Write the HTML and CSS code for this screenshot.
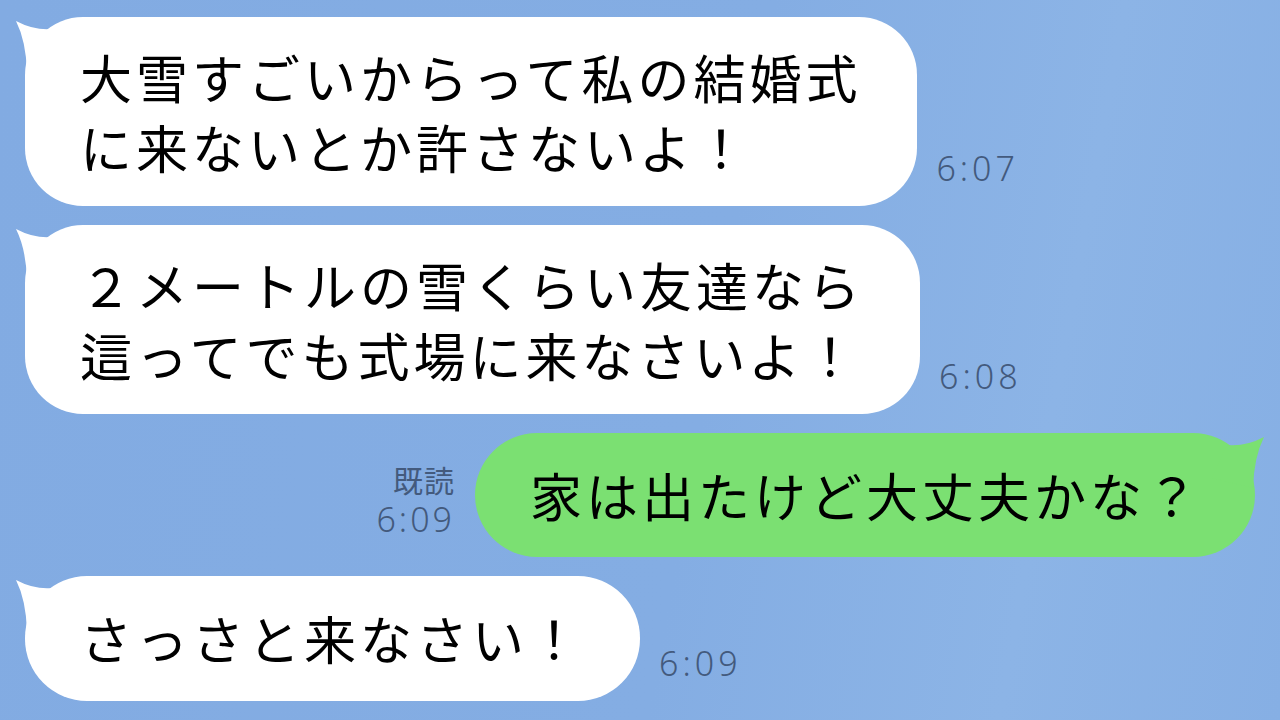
FILE: index.html
```html
<!DOCTYPE html>
<html lang="ja">
<head>
  <meta charset="UTF-8" />
  <title>トーク</title>
  <link rel="stylesheet" href="styles.css">
</head>
<body>
  <div class="talk">
    <div class="row in">
      <div class="bubble">
        <svg class="tail" viewBox="0 0 70 70" width="70" height="70"><path d="M3,4 Q22,14 40,12 L55,45 L14,55 Q13,24 3,4 Z" /></svg>
        大雪すごいからって私の結婚式<br>に来ないとか許さないよ！
      </div>
      <div class="meta"><span>6:07</span></div>
    </div>

    <div class="row in">
      <div class="bubble">
        <svg class="tail" viewBox="0 0 70 70" width="70" height="70"><path d="M3,4 Q22,14 40,12 L55,45 L14,55 Q13,24 3,4 Z" /></svg>
        ２メートルの雪くらい友達なら<br>這ってでも式場に来なさいよ！
      </div>
      <div class="meta"><span>6:08</span></div>
    </div>

    <div class="row out">
      <div class="meta"><span class="read">既読</span><span>6:09</span></div>
      <div class="bubble green">
        <svg class="tail" viewBox="0 0 70 70" width="70" height="70"><path d="M3,4 Q22,14 40,12 L55,45 L14,55 Q13,24 3,4 Z" /></svg>
        家は出たけど大丈夫かな？
      </div>
    </div>

    <div class="row in">
      <div class="bubble">
        <svg class="tail" viewBox="0 0 70 70" width="70" height="70"><path d="M3,4 Q22,14 40,12 L55,45 L14,55 Q13,24 3,4 Z" /></svg>
        さっさと来なさい！
      </div>
      <div class="meta"><span>6:09</span></div>
    </div>
  </div>
</body>
</html>
```

FILE: styles.css
```css
:root {
  font-family: "Noto Sans CJK JP", "Noto Sans", sans-serif;
}
html, body {
  margin: 0; padding: 0;
  width: 100%;
  height: 100%;
  overflow: hidden;
}
body {
  background: linear-gradient(100deg, #82abe2 0%, #84ade3 55%, #8cb4e6 80%, #86afe4 100%);
}
.talk {
  display: flex;
  flex-direction: column;
  gap: 19px;
  padding: 17px 25px 0 25px;
}
.row {
  display: flex;
  align-items: flex-end;
}
.row.out {
  justify-content: flex-end;
  gap: 20px;
}
.row.in {
  gap: 19px;
}
.bubble {
  position: relative;
  background: #fff;
  color: #000;
  font-size: 52px;
  font-weight: 400;
  line-height: 70px;
  letter-spacing: 4px;
  padding: 25px 56px 24px 55px;
  border-radius: 58px;
  white-space: nowrap;
}
.bubble .tail {
  position: absolute;
  left: -12px;
  top: 0;
  fill: #fff;
}
.bubble.green {
  background: #7be072;
  padding: 27px 53px 27px 55px;
  border-radius: 62px;
}
.bubble.green .tail {
  left: auto;
  right: -12px;
  transform: scaleX(-1);
  fill: #7be072;
}
.row.in:last-child .bubble {
  border-radius: 62px;
  padding-top: 27px;
  padding-bottom: 28px;
}
.meta {
  display: flex;
  flex-direction: column;
  align-items: flex-end;
  margin-bottom: 18px;
  color: #435a7d;
  font-family: "Noto Sans", sans-serif;
  font-size: 34px;
  font-weight: 300;
  line-height: 39px;
  letter-spacing: 4px;
}
.row.out .meta {
  letter-spacing: 3px;
}
.meta .read {
  font-family: "Noto Sans CJK JP", sans-serif;
  font-size: 30px;
  font-weight: 400;
  line-height: 36px;
  margin-bottom: 3px;
  letter-spacing: 1px;
}
```
